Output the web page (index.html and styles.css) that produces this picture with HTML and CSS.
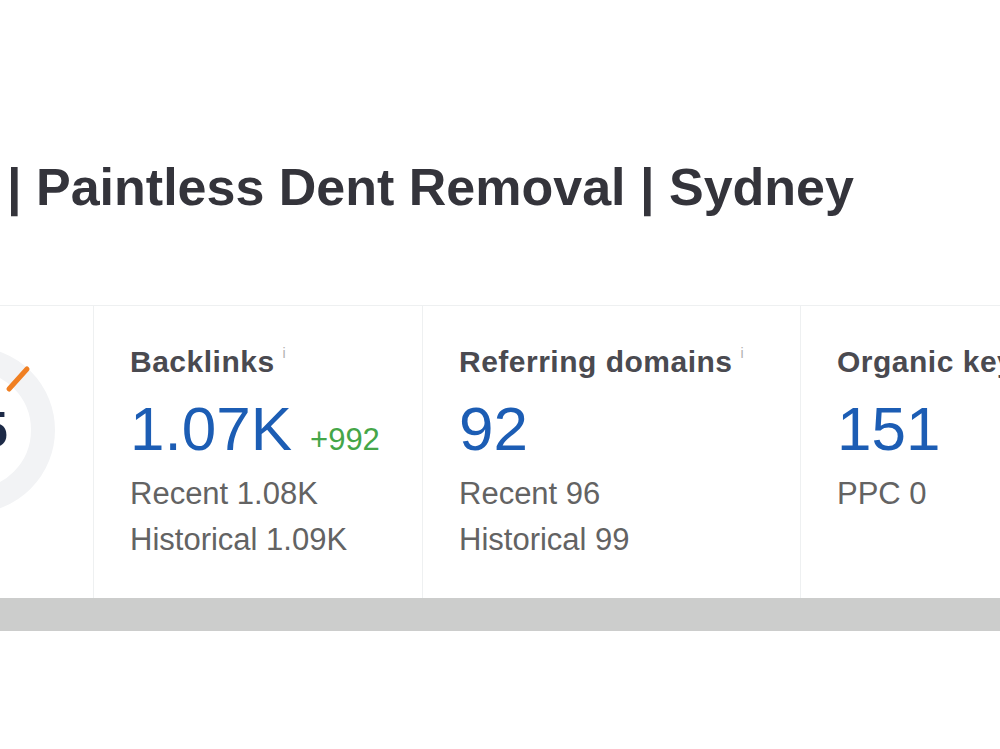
FILE: index.html
```html
<!DOCTYPE html>
<html lang="en">
<head>
  <meta charset="UTF-8">
  <title>Site Explorer – Overview</title>
  <link rel="stylesheet" href="styles.css">
</head>
<body>
  <div class="page">
    <h1 class="site-title">| Paintless Dent Removal | Sydney</h1>

    <div class="metrics">
      <div class="metric metric-dr">
        <svg class="dr-gauge" width="92" height="291" viewBox="0 0 92 291">
          <circle cx="-28" cy="124" r="71" fill="none" stroke="#f2f3f5" stroke-width="24"/>
          <line x1="9" y1="83" x2="27" y2="63" stroke="#f07f22" stroke-width="5" stroke-linecap="round"/>
          <text x="-20" y="141" text-anchor="middle" class="dr-value">15</text>
        </svg>
      </div>

      <div class="metric">
        <div class="metric-label">Backlinks<sup class="info">i</sup></div>
        <div class="metric-value">1.07K<span class="delta">+992</span></div>
        <div class="metric-sub">Recent 1.08K</div>
        <div class="metric-sub">Historical 1.09K</div>
      </div>

      <div class="metric metric-wide">
        <div class="metric-label">Referring domains<sup class="info">i</sup></div>
        <div class="metric-value">92</div>
        <div class="metric-sub">Recent 96</div>
        <div class="metric-sub">Historical 99</div>
      </div>

      <div class="metric metric-last">
        <div class="metric-label">Organic keywords<sup class="info">i</sup></div>
        <div class="metric-value">151</div>
        <div class="metric-sub">PPC 0</div>
      </div>
    </div>

    <div class="scrollbar"></div>
  </div>
</body>
</html>
```

FILE: styles.css
```css
body {
  margin: 0;
  background: #fff;
  font-family: 'Liberation Sans', Arial, sans-serif;
  color: #333;
  overflow: hidden;
}
.page {
  width: 1000px;
  height: 749px;
  overflow: hidden;
}
.site-title {
  margin: 0;
  padding: 157px 0 0 7px;
  font-size: 52px;
  line-height: 60px;
  font-weight: bold;
  color: #34343b;
  white-space: nowrap;
}
.metrics {
  display: flex;
  margin-top: 88px;
  border-top: 1px solid #eef0f1;
  width: 1300px;
}
.metric {
  flex: 0 0 329px;
  box-sizing: border-box;
  height: 292px;
  padding: 38px 0 0 36px;
  border-left: 1px solid #eef0f1;
  white-space: nowrap;
}
.metric-dr {
  flex: 0 0 93px;
  padding: 0;
  border-left: none;
  overflow: hidden;
}
.dr-gauge {
  display: block;
}
.dr-value {
  font-family: 'Liberation Sans', Arial, sans-serif;
  font-size: 50px;
  font-weight: bold;
  fill: #1d2a47;
}
.metric-wide {
  flex-basis: 378px;
}
.metric-last {
  flex-basis: 400px;
}
.metric-label {
  font-size: 30px;
  line-height: 36px;
  font-weight: bold;
  letter-spacing: 0.5px;
  color: #4a4a50;
}
.info {
  font-size: 14px;
  line-height: 0;
  font-weight: normal;
  color: #b0b0b0;
  margin-left: 8px;
  vertical-align: 14px;
}
.metric-value {
  margin-top: 14px;
  font-size: 62px;
  line-height: 70px;
  color: #1c5db4;
}
.delta {
  margin-left: 18px;
  font-size: 31px;
  line-height: 0;
  color: #45a648;
}
.metric-sub {
  font-size: 31px;
  line-height: 46px;
  color: #636363;
}
.metric-value + .metric-sub {
  margin-top: 7px;
}
.scrollbar {
  height: 33px;
  background: #cccdcc;
}
```
